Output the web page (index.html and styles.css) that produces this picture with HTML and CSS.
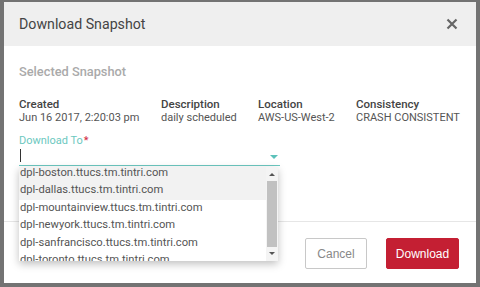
FILE: index.html
```html
<!DOCTYPE html>
<html lang="en">
<head>
    <meta charset="UTF-8">
    <title>Download Snapshot</title>
    <link rel="stylesheet" href="styles.css">
</head>
<body>
    <div class="modal">
        <div class="modal-header">
            <h2>Download Snapshot</h2>
            <svg class="close" width="12" height="12" viewBox="0 0 12 12">
                <path d="M1.5 1.5 L10.5 10.5 M10.5 1.5 L1.5 10.5" stroke="#666" stroke-width="2.2" fill="none"/>
            </svg>
        </div>
        <div class="modal-body">
            <h3>Selected Snapshot</h3>
            <div class="info-grid">
                <div class="info-item">
                    <div class="info-label">Created</div>
                    <div class="info-value">Jun 16 2017, 2:20:03 pm</div>
                </div>
                <div class="info-item">
                    <div class="info-label">Description</div>
                    <div class="info-value">daily scheduled</div>
                </div>
                <div class="info-item">
                    <div class="info-label">Location</div>
                    <div class="info-value">AWS-US-West-2</div>
                </div>
                <div class="info-item">
                    <div class="info-label">Consistency</div>
                    <div class="info-value">CRASH CONSISTENT</div>
                </div>
            </div>
            <div class="field">
                <label class="field-label">Download To<span class="req">*</span></label>
                <div class="select-box">
                    <span class="caret-line"></span>
                    <span class="arrow"></span>
                </div>
                <div class="dropdown">
                    <ul class="options">
                        <li class="hover">dpl-boston.ttucs.tm.tintri.com</li>
                        <li class="hover">dpl-dallas.ttucs.tm.tintri.com</li>
                        <li>dpl-mountainview.ttucs.tm.tintri.com</li>
                        <li>dpl-newyork.ttucs.tm.tintri.com</li>
                        <li>dpl-sanfrancisco.ttucs.tm.tintri.com</li>
                        <li>dpl-toronto.ttucs.tm.tintri.com</li>
                    </ul>
                    <div class="scrollbar">
                        <span class="sb-up"></span>
                        <span class="sb-thumb"></span>
                        <span class="sb-down"></span>
                    </div>
                </div>
            </div>
        </div>
        <div class="modal-footer">
            <button class="btn btn-cancel">Cancel</button>
            <button class="btn btn-primary">Download</button>
        </div>
    </div>
</body>
</html>
```
FILE: styles.css
```css
* {
    margin: 0;
    padding: 0;
    box-sizing: border-box;
}
body {
    font-family: Roboto, 'Liberation Sans', sans-serif;
    background: #737373;
    width: 480px;
    height: 287px;
    overflow: hidden;
    padding: 2px 4px 4px 4px;
}
.modal {
    background: #fff;
    height: 281px;
    display: flex;
    flex-direction: column;
}
.modal-header {
    height: 44px;
    background: #efefef;
    display: flex;
    align-items: center;
    justify-content: space-between;
    padding: 0 18px 0 15px;
    flex: none;
}
.modal-header h2 {
    font-size: 14.2px;
    font-weight: 400;
    color: #444;
}
.close {
    display: block;
}
.modal-body {
    padding: 17px 15px 0 15px;
    height: 175px;
    flex: none;
}
.modal-body h3 {
    font-size: 12.8px;
    font-weight: 500;
    color: #aaa;
    line-height: 18px;
}
.info-grid {
    display: grid;
    grid-template-columns: 142px 97px 98px 1fr;
    margin-top: 16px;
}
.info-label {
    font-size: 11.5px;
    font-weight: 500;
    color: #444;
    line-height: 14px;
    white-space: nowrap;
}
.info-value {
    font-size: 11px;
    color: #555;
    line-height: 14px;
    white-space: nowrap;
}
.field {
    position: relative;
    width: 261px;
    margin-top: 9px;
}
.field-label {
    display: block;
    font-size: 11px;
    color: #6cc8c0;
    line-height: 13px;
}
.req {
    color: #d0263c;
    margin-left: 1px;
}
.select-box {
    height: 19px;
    border-bottom: 1px solid #6cc8c0;
    position: relative;
}
.caret-line {
    position: absolute;
    left: 1px;
    top: 2px;
    width: 1px;
    height: 13px;
    background: #333;
}
.arrow {
    position: absolute;
    right: 2px;
    top: 8px;
    border-left: 4px solid transparent;
    border-right: 4px solid transparent;
    border-top: 4px solid #5cc1ba;
}
.dropdown {
    position: absolute;
    top: 33px;
    left: 0;
    width: 259px;
    height: 94px;
    background: #fff;
    box-shadow: 0 3px 8px rgba(0, 0, 0, 0.25);
    display: flex;
    overflow: hidden;
    z-index: 2;
}
.options {
    list-style: none;
    flex: 1;
    margin-top: -2px;
}
.options li {
    height: 17.4px;
    line-height: 15px;
    font-size: 11.2px;
    color: #555;
    padding-left: 1px;
    white-space: nowrap;
}
.options li.hover {
    background: #f2f2f2;
}
.scrollbar {
    width: 12px;
    background: #f4f4f4;
    display: flex;
    flex-direction: column;
    align-items: center;
}
.sb-up, .sb-down {
    width: 0;
    height: 0;
    border-left: 3px solid transparent;
    border-right: 3px solid transparent;
}
.sb-up {
    border-bottom: 3px solid #555;
    margin: 6px 0 5px;
}
.sb-down {
    border-top: 3px solid #555;
    margin: 5px 0 6px;
}
.sb-thumb {
    flex: 1;
    width: 10px;
    background: #c1c1c1;
}
.modal-footer {
    border-top: 1px solid #e6e6e6;
    flex: 1;
    display: flex;
    justify-content: flex-end;
    align-items: flex-start;
    gap: 19px;
    padding: 16px 17px 0 0;
}
.btn {
    height: 31px;
    font-family: 'Liberation Sans', Arial, sans-serif;
    font-size: 12px;
    border-radius: 2px;
    cursor: pointer;
}
.btn-cancel {
    width: 62px;
    background: #fff;
    border: 1px solid #c8c8c8;
    color: #888;
}
.btn-primary {
    width: 73px;
    background: #c41f33;
    border: 1px solid #c41f33;
    color: #fff;
}
```
